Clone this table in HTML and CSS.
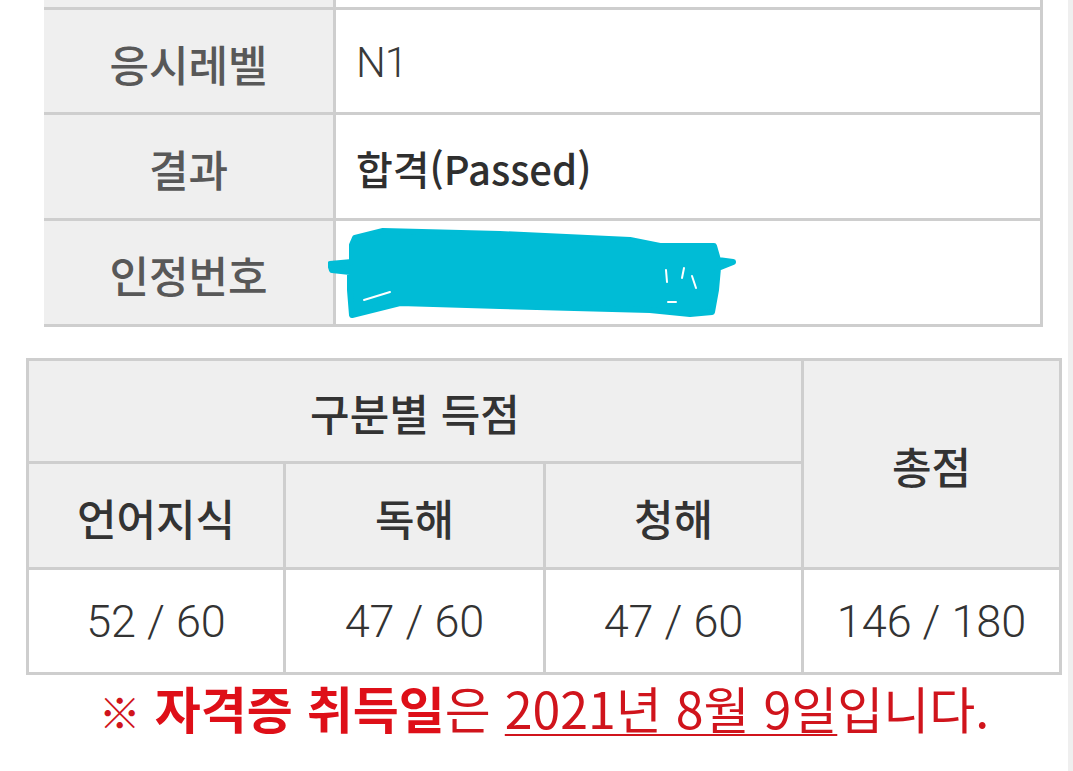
FILE: index.html
```html
<!DOCTYPE html>
<html lang="ko">
<head>
<meta charset="utf-8">
<title>JLPT 결과</title>
<link rel="stylesheet" href="styles.css">
</head>
<body>
<div class="screen">
  <main class="content">
    <div class="info">
      <div class="k partial"></div><div class="v partial"></div>
      <div class="k">응시레벨</div><div class="v latin">N1</div>
      <div class="k">결과</div><div class="v strong">합격(Passed)</div>
      <div class="k">인정번호</div>
      <div class="v masked">
        <svg class="scribble" viewBox="0 0 410 95" width="410" height="95" aria-hidden="true">
          <path d="M27 12 L55 5 L172 8 L302 14 L332 20 L386 20 L390 34 L405 36 L390 42 L388 64 L384 86 L362 88 L322 84 L172 80 L72 77 L24 89 L22 64 L22 46 L4 44 L2 38 L24 36 L24 19 Z" fill="#00bcd6" stroke="#00bcd6" stroke-width="6" stroke-linejoin="round"/>
          <g stroke="#ffffff" stroke-width="2" stroke-linecap="round" fill="none">
            <path d="M36 74 L62 66"/>
            <path d="M338 44 L339 56"/>
            <path d="M356 42 L354 52"/>
            <path d="M364 50 L368 62"/>
            <path d="M340 76 L348 76"/>
          </g>
        </svg>
      </div>
    </div>

    <div class="scores">
      <div class="cell head group">구분별 득점</div>
      <div class="cell head total">총점</div>
      <div class="cell head">언어지식</div>
      <div class="cell head">독해</div>
      <div class="cell head">청해</div>
      <div class="cell val">52 / 60</div>
      <div class="cell val">47 / 60</div>
      <div class="cell val">47 / 60</div>
      <div class="cell val">146 / 180</div>
    </div>

    <p class="note"><span class="mark">※</span> <b>자격증 취득일</b>은 <u>2021년 8월 9일</u>입니다.</p>
  </main>
  <div class="rail"></div>
</div>
</body>
</html>
```

FILE: styles.css
```css
html, body {
  margin: 0;
  padding: 0;
  background: #ffffff;
}

body {
  font-family: "Noto Sans CJK KR", "Noto Sans", sans-serif;
  color: #333333;
}

.screen {
  display: flex;
  width: 1073px;
  height: 771px;
  overflow: hidden;
}

.content {
  flex: 0 0 1068px;
  display: flex;
  flex-direction: column;
}

.rail {
  flex: 0 0 5px;
  background: #efefef;
}

/* ---------- top info table ---------- */
.info {
  margin-left: 44px;
  width: 999px;
  box-sizing: border-box;
  display: grid;
  grid-template-columns: 289px 704px;
  grid-template-rows: 7px 102px 103px 103px;
  gap: 3px;
  padding: 0 3px 3px 0;
  background: #cecece;
}

.info .k {
  background: #efefef;
  display: flex;
  align-items: center;
  justify-content: center;
  font-size: 43px;
  font-weight: 500;
  color: #585858;
  padding-top: 3px;
}

.info .v {
  background: #ffffff;
  display: flex;
  align-items: center;
  padding-left: 20px;
  font-size: 40px;
  color: #333333;
}

.info .partial {
  padding: 0;
}

.info .latin {
  font-family: Roboto, "Liberation Sans", sans-serif;
  font-weight: 300;
  font-size: 42px;
  letter-spacing: -1px;
  color: #3a3a3a;
  padding-top: 2px;
}

.info .strong {
  font-weight: 500;
  color: #2f2f2f;
  padding-top: 2px;
}

.info .masked {
  position: relative;
}

.scribble {
  position: absolute;
  left: -8px;
  top: 5px;
}

/* ---------- score table ---------- */
.scores {
  margin-top: 31px;
  margin-left: 26px;
  width: 1036px;
  box-sizing: border-box;
  display: grid;
  grid-template-columns: 254px 257px 255px 255px;
  grid-template-rows: 100px 103px 102px;
  gap: 3px;
  padding: 3px;
  background: #cecece;
}

.cell {
  display: flex;
  align-items: center;
  justify-content: center;
}

.head {
  background: #efefef;
  font-size: 43px;
  font-weight: 500;
  color: #333333;
  padding-top: 2px;
}

.group {
  grid-column: 1 / 4;
}

.total {
  grid-column: 4;
  grid-row: 1 / 3;
}

.val {
  background: #ffffff;
  font-family: Roboto, "Liberation Sans", sans-serif;
  font-weight: 300;
  font-size: 45px;
  color: #333333;
}

/* ---------- footnote ---------- */
.note {
  margin: 0 0 0 26px;
  width: 1036px;
  text-align: center;
  font-size: 50px;
  line-height: 64px;
  color: #d0141c;
  padding-top: 0;
}

.note b {
  font-weight: 700;
  color: #de0f18;
}

.note u {
  text-decoration-thickness: 2px;
  text-underline-offset: 5px;
}

.note .mark {
  font-size: 42px;
}
```
